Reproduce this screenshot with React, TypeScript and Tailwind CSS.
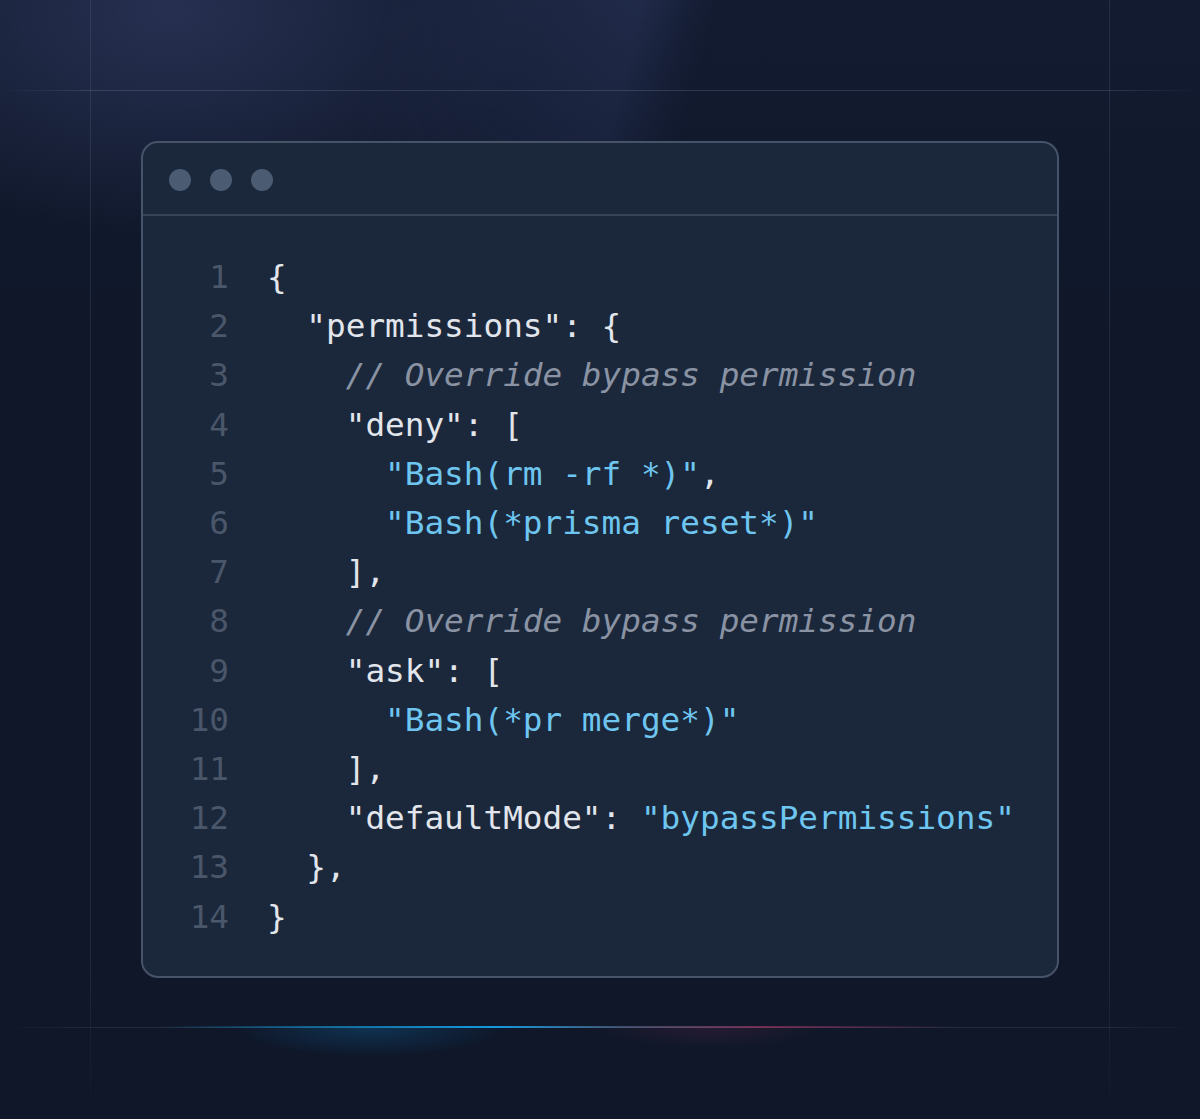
import React from "react";

type Tok = { t: string; c?: "s" | "m" | "p" };
const lines: Tok[][] = [
  [{ t: "{" }],
  [{ t: '  "permissions": {' }],
  [{ t: "    // Override bypass permission", c: "m" }],
  [{ t: '    "deny": [' }],
  [{ t: "      " }, { t: '"Bash(rm -rf *)"', c: "s" }, { t: "," }],
  [{ t: "      " }, { t: '"Bash(*prisma reset*)"', c: "s" }],
  [{ t: "    ]," }],
  [{ t: "    // Override bypass permission", c: "m" }],
  [{ t: '    "ask": [' }],
  [{ t: "      " }, { t: '"Bash(*pr merge*)"', c: "s" }],
  [{ t: "    ]," }],
  [{ t: '    "defaultMode": ' }, { t: '"bypassPermissions"', c: "s" }],
  [{ t: "  }," }],
  [{ t: "}" }],
];

export default function App() {
  return (
    <div className="relative w-[1200px] h-[1119px] overflow-hidden bg-[#0f1729]">
      {/* background glows */}
      <div className="absolute inset-0 bg-[radial-gradient(ellipse_520px_320px_at_170px_10px,rgba(58,68,112,0.6),transparent_70%)]" />
      <div className="absolute left-0 top-0 w-[1200px] h-[320px] bg-[linear-gradient(105deg,transparent_30%,rgba(50,62,104,0.35)_40%,rgba(52,64,108,0.5)_50%,rgba(40,50,90,0.2)_54%,transparent_56%)] [mask-image:linear-gradient(180deg,black,transparent)]" />
      <div className="absolute inset-0 bg-[linear-gradient(180deg,rgba(30,40,70,0.25),transparent_30%)]" />

      {/* grid lines */}
      <div className="absolute left-0 right-0 top-[90px] h-px bg-[linear-gradient(90deg,transparent,rgba(148,163,184,0.22)_8%,rgba(148,163,184,0.22)_92%,transparent)]" />
      <div className="absolute left-0 right-0 top-[1027px] h-px bg-[linear-gradient(90deg,transparent,rgba(148,163,184,0.14)_8%,rgba(148,163,184,0.14)_92%,transparent)]" />
      <div className="absolute top-0 bottom-0 left-[90px] w-px bg-[linear-gradient(180deg,rgba(148,163,184,0.14),rgba(148,163,184,0.14)_85%,transparent)]" />
      <div className="absolute top-0 bottom-0 left-[1109px] w-px bg-[linear-gradient(180deg,rgba(148,163,184,0.14),rgba(148,163,184,0.14)_85%,transparent)]" />

      {/* bottom glow line */}
      <div className="absolute left-[160px] w-[800px] top-[1026px] h-[2px] bg-[linear-gradient(90deg,transparent,rgba(14,165,233,0.5)_18%,rgba(20,160,230,0.95)_42%,rgba(120,140,180,0.45)_58%,rgba(190,60,110,0.55)_75%,transparent)]" />
      <div className="absolute left-[200px] w-[340px] top-[1028px] h-[36px] bg-[radial-gradient(ellipse_50%_100%_at_50%_0%,rgba(14,130,200,0.25),transparent_80%)]" />
      <div className="absolute left-[560px] w-[300px] top-[1028px] h-[26px] bg-[radial-gradient(ellipse_50%_100%_at_50%_0%,rgba(160,50,100,0.15),transparent_80%)]" />

      {/* window */}
      <div className="relative pt-[141px] pl-[141px]">
        <div className="w-[918px] h-[837px] rounded-[17px] border-2 border-[#465368] bg-[#1b283b] flex flex-col overflow-hidden">
          <div className="h-[73px] flex items-center gap-[19px] pl-[26px] pt-[3px] border-b-2 border-[#364358]">
            <div className="w-[22px] h-[22px] rounded-full bg-[#4b5b72]" />
            <div className="w-[22px] h-[22px] rounded-full bg-[#4b5b72]" />
            <div className="w-[22px] h-[22px] rounded-full bg-[#4b5b72]" />
          </div>
          <div
            className="pt-[37px] pl-[46px] flex flex-col text-[32.7px] leading-[49.2px]"
            style={{ fontFamily: '"DejaVu Sans Mono", "Liberation Mono", monospace' }}
          >
            {lines.map((toks, i) => (
              <div key={i} className="flex whitespace-pre">
                <span className="w-[40px] text-right text-[#4a5669]">{i + 1}</span>
                <span className="pl-[38px] text-[#e2e6ec]">
                  {toks.map((tk, j) => (
                    <span
                      key={j}
                      className={
                        tk.c === "s"
                          ? "text-[#6ec6f0]"
                          : tk.c === "m"
                          ? "text-[#8a93a3] italic"
                          : "text-[#e2e6ec]"
                      }
                    >
                      {tk.t}
                    </span>
                  ))}
                </span>
              </div>
            ))}
          </div>
        </div>
      </div>
    </div>
  );
}
